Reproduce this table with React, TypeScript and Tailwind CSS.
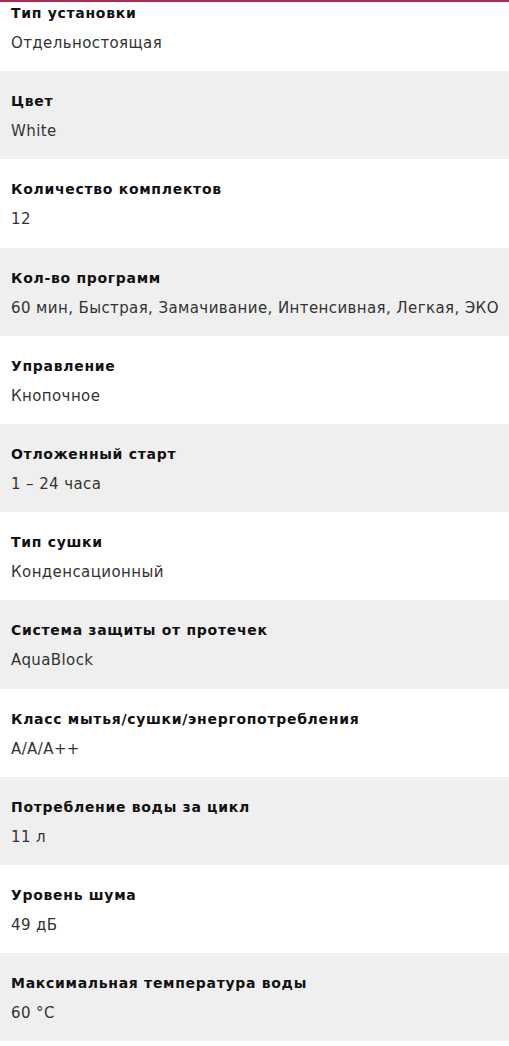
const specs = [
  { label: 'Тип установки', value: 'Отдельностоящая' },
  { label: 'Цвет', value: 'White' },
  { label: 'Количество комплектов', value: '12' },
  { label: 'Кол-во программ', value: '60 мин, Быстрая, Замачивание, Интенсивная, Легкая, ЭКО' },
  { label: 'Управление', value: 'Кнопочное' },
  { label: 'Отложенный старт', value: '1 – 24 часа' },
  { label: 'Тип сушки', value: 'Конденсационный' },
  { label: 'Система защиты от протечек', value: 'AquaBlock' },
  { label: 'Класс мытья/сушки/энергопотребления', value: 'A/A/A++' },
  { label: 'Потребление воды за цикл', value: '11 л' },
  { label: 'Уровень шума', value: '49 дБ' },
  { label: 'Максимальная температура воды', value: '60 °C' },
]

export default function App() {
  return (
    <div
      className="h-[1046px] overflow-hidden border-t-2 border-[#a3304f] bg-white text-[#1a1a1a]"
      style={{ fontFamily: '"DejaVu Sans", "Open Sans", sans-serif' }}
    >
      <dl className="-mt-[19px]">
        {specs.map((s, i) => (
          <div
            key={s.label}
            className={`h-[88.2px] px-[11px] pt-[20px] ${i % 2 === 1 ? 'bg-[#efefef]' : 'bg-white'}`}
          >
            <dt className="text-[14px] font-bold leading-[20px] tracking-[0.7px] text-[#111]">{s.label}</dt>
            <dd className="mt-[10px] text-[15px] leading-[20px] tracking-[0.4px] text-[#333] whitespace-nowrap">{s.value}</dd>
          </div>
        ))}
      </dl>
    </div>
  )
}
